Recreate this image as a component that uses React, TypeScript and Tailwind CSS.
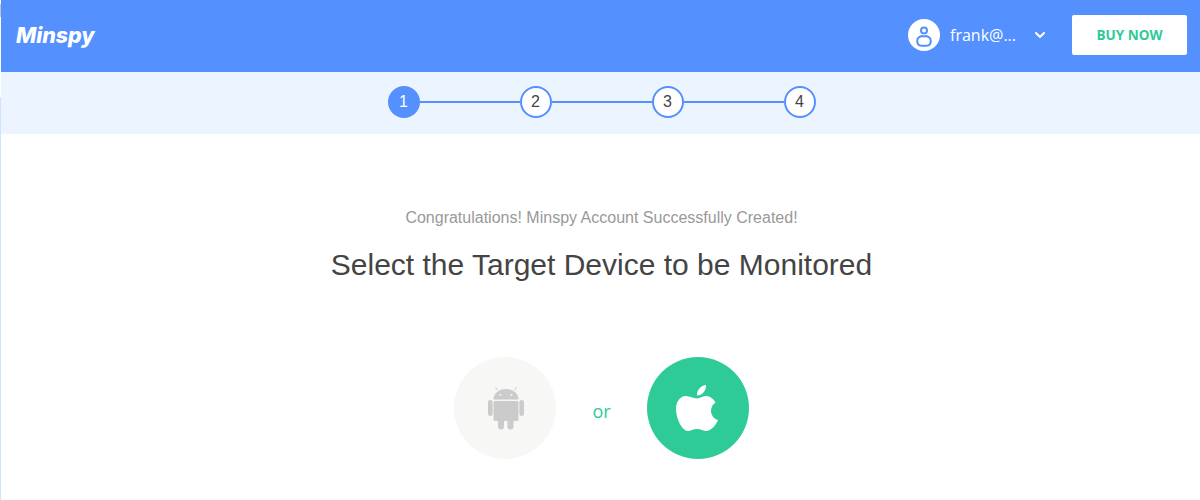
import { Fragment } from "react";
import { ChevronDown } from "lucide-react";

const STEPS = [1, 2, 3, 4];

function UserIcon() {
  return (
    <svg viewBox="0 0 16 21" className="mt-[3px] w-4 h-[21px]" fill="none" stroke="#5590ff" strokeWidth="2">
      <circle cx="8" cy="4.500" r="3" />
      <path d="M5.500 10C3 10.800 1.200 12.500 1.200 15 1.200 17.800 3 19.700 5.500 19.700h5c2.500 0 4.300-1.900 4.300-4.700 0-2.500-1.800-4.200-4.300-5-1.500.5-3.500.5-5 0z" />
    </svg>
  );
}

function AndroidIcon() {
  return (
    <svg viewBox="0 0 36 44" className="ml-[1px] w-9 h-11" fill="#cbcbcb">
      <path d="M5.500 13.500a12.500 10.500 0 0 1 25 0z" />
      <path d="M9.500 4.500 7.500 1M26.500 4.500l2-3.500" stroke="#cbcbcb" strokeWidth="0.9" />
      <rect x="5.500" y="15" width="25" height="20" rx="1.500" />
      <rect x="0" y="14" width="4.600" height="16" rx="2.300" />
      <rect x="31.400" y="14" width="4.600" height="16" rx="2.300" />
      <rect x="10" y="30" width="6" height="13.500" rx="3" />
      <rect x="19.500" y="30" width="6" height="13.500" rx="3" />
      <circle cx="12.500" cy="9" r="1" fill="#f7f7f6" />
      <circle cx="23.500" cy="9" r="1" fill="#f7f7f6" />
    </svg>
  );
}

function AppleIcon() {
  return (
    <svg viewBox="0 0 42 46" className="mr-[2px] w-[42px] h-[46px]" fill="#fff">
      <path d="M21 13.500C17 13.500 14 11 10 11 4 11 0 17 0 24c0 9 6 22 12 22 3 0 5-2 9-2s6 2 9 2c5 0 10-6 12-11-4-1-7-5-7-9 0-4 2-7 4.500-8.500C37 13 33 11 29.500 11 26 11 24 13.500 21 13.500z" />
      <path d="M21 10.500C20.500 5 25 .5 30 0c.5 5.500-4 10.500-9 10.500z" />
    </svg>
  );
}

export default function App() {
  return (
    <div className="flex h-[500px] w-[1200px] overflow-hidden bg-white font-['Liberation_Sans',Arial,sans-serif]">
      {/* stray 1px edge left over from the page behind */}
      <div className="flex w-px flex-col">
        <div className="mt-1 h-[13px] bg-[#c4c4c4]" />
        <div className="mt-[80px] flex-1 bg-[#cfe4ff]" />
      </div>

      <div className="flex-1">
        <header className="flex h-[72px] items-center justify-between bg-[#5590ff] pr-[13px] pl-[15px]">
          <span className="font-['Inter',sans-serif] text-[21.5px] leading-none font-extrabold tracking-[-0.1px] text-white italic">
            Minspy
          </span>
          <div className="flex items-center pb-[2px]">
            <div className="flex h-8 w-8 items-center justify-center rounded-full bg-white">
              <UserIcon />
            </div>
            <span className="ml-[10px] w-[82px] font-['Open_Sans',sans-serif] text-base text-white">frank@...</span>
            <ChevronDown className="h-4 w-4 text-white" strokeWidth={3} />
            <button className="ml-[24px] flex h-10 w-[115px] items-center justify-center rounded-[2px] bg-white font-['Open_Sans',sans-serif] text-[13.5px] font-bold text-[#2ecb98]">
              BUY NOW
            </button>
          </div>
        </header>

        <div className="flex h-[62px] items-center justify-center bg-[#ecf4ff] pb-[2px] pl-[2px]">
          {STEPS.map((step, i) => (
            <Fragment key={step}>
              {i > 0 && <div className="h-[2px] w-[100px] bg-[#5590ff]" />}
              <div
                className={
                  step === 1
                    ? "flex h-8 w-8 items-center justify-center rounded-full bg-[#5590ff] text-base text-white"
                    : "flex h-8 w-8 items-center justify-center rounded-full border-2 border-[#5590ff] bg-white text-base text-[#444]"
                }
              >
                {step}
              </div>
            </Fragment>
          ))}
        </div>

        <main className="flex flex-col items-center pl-[2px]">
          <p className="mt-[75px] text-base leading-[18px] text-[#999]">
            Congratulations! Minspy Account Successfully Created!
          </p>
          <h1 className="mt-[20px] text-[30px] leading-[36px] font-normal text-[#444]">
            Select the Target Device to be Monitored
          </h1>
          <div className="mt-[74px] flex items-center">
            <div className="flex h-[102px] w-[102px] items-center justify-center rounded-full bg-[#f7f7f6]">
              <AndroidIcon />
            </div>
            <span className="mt-[5px] w-[91px] text-center font-['Open_Sans',sans-serif] text-lg text-[#2ecb98]">or</span>
            <div className="flex h-[102px] w-[102px] items-center justify-center rounded-full bg-[#2ecb98]">
              <AppleIcon />
            </div>
          </div>
        </main>
      </div>
    </div>
  );
}
